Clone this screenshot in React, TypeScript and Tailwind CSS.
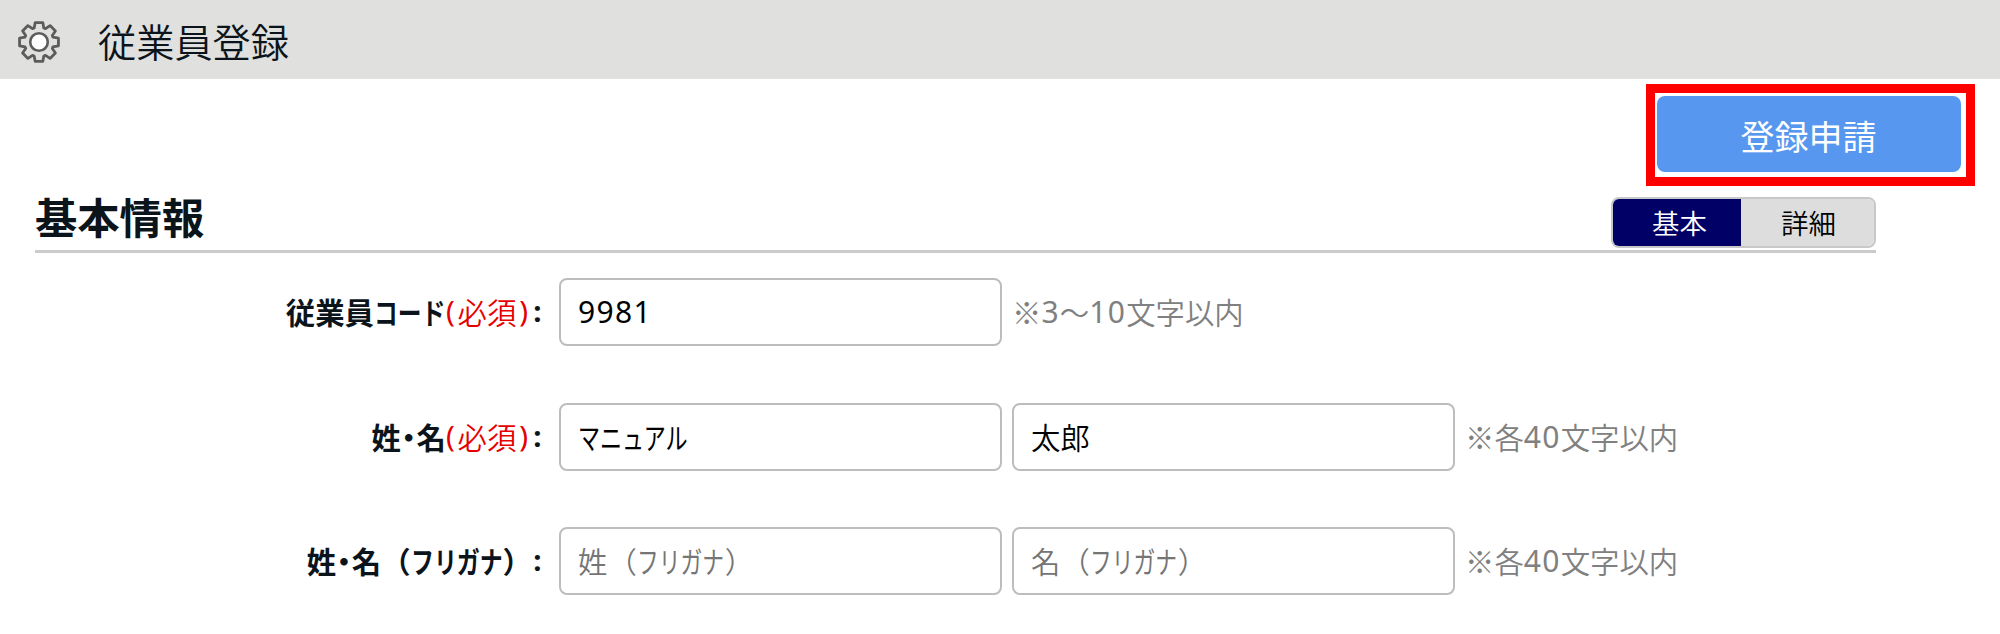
import type { ReactNode } from 'react';

// Outline of one gear tooth in polar form: [angle offset in degrees, radius]
const tooth = [[-19, 14.8], [-11, 19.8], [11, 19.8], [19, 14.8]];

const gearPoints = Array.from({ length: 8 }, (_, i) =>
  tooth.map(([offset, r]) => {
    const a = ((i * 45 + offset) * Math.PI) / 180;
    return `${(r * Math.sin(a)).toFixed(2)},${(-r * Math.cos(a)).toFixed(2)}`;
  }).join(' ')
).join(' ');

function GearIcon() {
  return (
    <svg width="44" height="44" viewBox="-22 -22 44 44" fill="none" stroke="#5c5c5c" strokeWidth="2.8" strokeLinejoin="round">
      <polygon points={gearPoints} />
      <circle r="8.8" fill="#fff" strokeWidth="2.6" />
    </svg>
  );
}

// Proportional kana: squeezes a run of text into a fixed advance width
function Run({ children, width, scale }: { children: ReactNode; width: string; scale: string }) {
  return (
    <span className={`inline-block whitespace-nowrap ${width}`}>
      <span className={`inline-block origin-left ${scale}`}>{children}</span>
    </span>
  );
}

function Required() {
  return (
    <span className="mr-[4px] inline-flex w-[82px] justify-between font-[350] text-[#e60000]">
      <span className="font-['Noto_Sans'] font-normal">(</span>
      <span>必須</span>
      <span className="font-['Noto_Sans'] font-normal">)</span>
    </span>
  );
}

function Field({ children, muted }: { children: ReactNode; muted?: boolean }) {
  return (
    <div className={`flex h-[68px] w-[443px] items-center rounded-lg border-2 border-[#bdbdbd] bg-white pl-[17px] ${muted ? 'text-[#757575]' : 'text-black'}`}>
      {children}
    </div>
  );
}

function Hint({ children }: { children: ReactNode }) {
  return <span className="flex items-center text-[#808080]">{children}</span>;
}

function Digits({ children }: { children: string }) {
  return <span className="font-['Noto_Sans'] text-[30px] font-[380] tracking-[1.3px]">{children}</span>;
}

function MiddleDot() {
  return <span className="mx-[0.5px] [font-feature-settings:'halt']">・</span>;
}

function Row({ label, children }: { label: ReactNode; children: ReactNode }) {
  return (
    <div className="flex h-[68px] items-center text-[29.4px] leading-none font-[350]">
      <div className="flex w-[559px] items-center justify-end pr-[16px] font-bold text-[#0b141a]">
        {label}
        <span className="w-[11px] text-center font-['Noto_Sans']">:</span>
      </div>
      <div className="flex items-center gap-[10px]">{children}</div>
    </div>
  );
}

export default function App() {
  return (
    <div className="h-[634px] w-[2000px] overflow-hidden bg-white font-['Noto_Sans_CJK_JP',sans-serif]">
      <header className="flex h-[79px] items-center bg-[#e0e0de] pt-[5px] pl-[17px]">
        <GearIcon />
        <h1 className="-mt-[1px] ml-[37px] text-[38.2px] leading-none font-[350] text-[#0b141a]">従業員登録</h1>
      </header>

      <div className="mt-[5px] ml-[1646px] h-[102px] w-[329px] border-[9px] border-[#ff0000] pt-[3px] pl-[2px]">
        <button className="flex h-[76px] w-[304px] items-center justify-center rounded-lg bg-[#5897f0] pt-[4px] pr-[1px] text-[34px] leading-none font-normal text-white">
          登録申請
        </button>
      </div>

      <section className="mt-[11px] ml-[35px] flex h-[56px] w-[1841px] justify-between border-b-3 border-[#cbcbcb]">
        <h2 className="text-[42.3px] leading-[37px] font-bold text-[#0b141a]">基本情報</h2>
        <div className="flex h-[51px] w-[265px] overflow-hidden rounded-lg border-2 border-[#c8c8c8] text-[27.5px] leading-none font-[350]">
          <button className="w-[128px] bg-[#000066] pt-[1px] pl-[5px] text-white">基本</button>
          <button className="flex-1 bg-[#dddddd] pt-[1px] pl-[2px] text-black">詳細</button>
        </div>
      </section>

      <form className="mt-[25px] flex flex-col gap-[56.5px]">
        <Row
          label={
            <>
              従業員
              <Run width="w-[72px]" scale="scale-x-[0.81]">コード</Run>
              <Required />
            </>
          }
        >
          <Field>
            <Digits>9981</Digits>
          </Field>
          <Hint>
            ※<Digits>3</Digits>～<Digits>10</Digits>文字以内
          </Hint>
        </Row>
        <Row
          label={
            <>
              姓<MiddleDot />名
              <Required />
            </>
          }
        >
          <Field>
            <Run width="w-[111px]" scale="scale-x-[0.75] font-normal">マニュアル</Run>
          </Field>
          <Field>太郎</Field>
          <Hint>
            ※各<Digits>40</Digits>文字以内
          </Hint>
        </Row>
        <Row
          label={
            <>
              姓<MiddleDot />名（
              <Run width="w-[92px]" scale="scale-x-[0.78]">フリガナ</Run>
              ）
            </>
          }
        >
          <Field muted>
            姓（
            <Run width="w-[88px]" scale="scale-x-[0.74] font-normal">フリガナ</Run>
            ）
          </Field>
          <Field muted>
            名（
            <Run width="w-[88px]" scale="scale-x-[0.74] font-normal">フリガナ</Run>
            ）
          </Field>
          <Hint>
            ※各<Digits>40</Digits>文字以内
          </Hint>
        </Row>
      </form>
    </div>
  );
}
